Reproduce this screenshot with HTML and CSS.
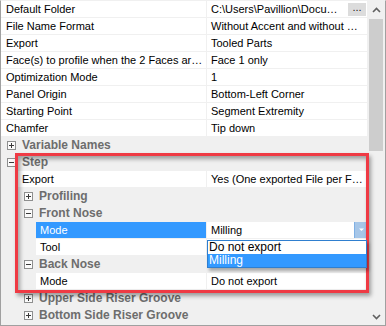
FILE: index.html
```html
<!DOCTYPE html>
<html>
<head>
<meta charset="utf-8">
<link rel="stylesheet" href="styles.css">
</head>
<body>
<div class="grid">
  <div class="rows">
    <div class="row prop l0"><div class="name">Default Folder</div><div class="val"><span class="txt">C:\Users\Pavillion\Docu…</span><span class="dots">...</span></div></div>
    <div class="row prop l0"><div class="name">File Name Format</div><div class="val"><span class="txt">Without Accent and without …</span></div></div>
    <div class="row prop l0"><div class="name">Export</div><div class="val"><span class="txt">Tooled Parts</span></div></div>
    <div class="row prop l0"><div class="name">Face(s) to profile when the 2 Faces ar…</div><div class="val"><span class="txt">Face 1 only</span></div></div>
    <div class="row prop l0"><div class="name">Optimization Mode</div><div class="val"><span class="txt">1</span></div></div>
    <div class="row prop l0"><div class="name">Panel Origin</div><div class="val"><span class="txt">Bottom-Left Corner</span></div></div>
    <div class="row prop l0"><div class="name">Starting Point</div><div class="val"><span class="txt">Segment Extremity</span></div></div>
    <div class="row prop l0"><div class="name">Chamfer</div><div class="val"><span class="txt">Tip down</span></div></div>
    <div class="row cat c0"><svg class="box" width="9" height="9" viewBox="0 0 9 9"><rect x="0.5" y="0.5" width="8" height="8" fill="#fbfbfb" stroke="#8e8f8f"/><path d="M2 4.5h5M4.5 2v5" stroke="#3a3a3a"/></svg><span class="ctxt">Variable Names</span></div>
    <div class="row cat c0"><svg class="box" width="9" height="9" viewBox="0 0 9 9"><rect x="0.5" y="0.5" width="8" height="8" fill="#fbfbfb" stroke="#8e8f8f"/><path d="M2 4.5h5" stroke="#3a3a3a"/></svg><span class="ctxt">Step</span></div>
    <div class="row prop l1"><div class="name">Export</div><div class="val"><span class="txt">Yes (One exported File per F…</span></div></div>
    <div class="row cat c1"><svg class="box" width="9" height="9" viewBox="0 0 9 9"><rect x="0.5" y="0.5" width="8" height="8" fill="#fbfbfb" stroke="#8e8f8f"/><path d="M2 4.5h5M4.5 2v5" stroke="#3a3a3a"/></svg><span class="ctxt">Profiling</span></div>
    <div class="row cat c1"><svg class="box" width="9" height="9" viewBox="0 0 9 9"><rect x="0.5" y="0.5" width="8" height="8" fill="#fbfbfb" stroke="#8e8f8f"/><path d="M2 4.5h5" stroke="#3a3a3a"/></svg><span class="ctxt">Front Nose</span></div>
    <div class="row prop l2 sel"><div class="name">Mode</div><div class="val combo"><span class="txt">Milling</span><span class="drop"><svg width="7" height="4" viewBox="0 0 7 4"><path d="M1 0.5h5L3.5 3z" fill="#fff"/></svg></span></div></div>
    <div class="row prop l2"><div class="name">Tool</div><div class="val"><span class="txt"></span></div></div>
    <div class="row cat c1"><svg class="box" width="9" height="9" viewBox="0 0 9 9"><rect x="0.5" y="0.5" width="8" height="8" fill="#fbfbfb" stroke="#8e8f8f"/><path d="M2 4.5h5" stroke="#3a3a3a"/></svg><span class="ctxt">Back Nose</span></div>
    <div class="row prop l2"><div class="name">Mode</div><div class="val"><span class="txt">Do not export</span></div></div>
    <div class="row cat c1"><svg class="box" width="9" height="9" viewBox="0 0 9 9"><rect x="0.5" y="0.5" width="8" height="8" fill="#fbfbfb" stroke="#8e8f8f"/><path d="M2 4.5h5M4.5 2v5" stroke="#3a3a3a"/></svg><span class="ctxt">Upper Side Riser Groove</span></div>
    <div class="row cat c1"><svg class="box" width="9" height="9" viewBox="0 0 9 9"><rect x="0.5" y="0.5" width="8" height="8" fill="#fbfbfb" stroke="#8e8f8f"/><path d="M2 4.5h5M4.5 2v5" stroke="#3a3a3a"/></svg><span class="ctxt">Bottom Side Riser Groove</span></div>
  </div>
  <div class="scroll">
    <div class="arrow"><svg width="9" height="6" viewBox="0 0 9 6"><path d="M1 5L4.5 1.5L8 5" fill="none" stroke="#606060" stroke-width="1.6"/></svg></div>
    <div class="track"><div class="thumb"></div></div>
    <div class="arrow"><svg width="9" height="6" viewBox="0 0 9 6"><path d="M1 1L4.5 4.5L8 1" fill="none" stroke="#606060" stroke-width="1.6"/></svg></div>
  </div>
  <div class="frame"></div>
  <div class="list">
    <div class="item">Do not export</div>
    <div class="item on">Milling</div>
  </div>
</div>
</body>
</html>
```

FILE: styles.css
```css
* { box-sizing: border-box; }
body {
  margin: 0;
  font-family: "Liberation Sans", Arial, sans-serif;
  font-size: 11px;
  color: #000;
}
.grid {
  position: relative;
  width: 386px;
  height: 326px;
  display: flex;
  background: #f0f0f0;
  border: 1px solid #a0a0a0;
  border-top: 1px solid #f0f0f0;
  overflow: hidden;
}
.rows {
  width: 367px;
  padding-right: 1px;
  display: flex;
  flex-direction: column;
  gap: 1px;
}
.row {
  height: 16px;
  flex-shrink: 0;
}
.prop {
  display: grid;
  grid-template-columns: 1fr 160px;
  column-gap: 1px;
}
.prop .name {
  background: #fff;
  line-height: 16px;
  white-space: nowrap;
  overflow: hidden;
  padding-left: 4px;
}
.l0 .name { padding-left: 5px; }
.l1 { margin-left: 17px; }
.l2 { margin-left: 35px; }
.val {
  background: #fff;
  display: flex;
  align-items: center;
  padding-left: 4px;
  white-space: nowrap;
  overflow: hidden;
}
.val .txt { flex: 1; line-height: 16px; }
.dots {
  width: 18px;
  height: 13px;
  margin-right: 1px;
  background: #dcdcdc;
  line-height: 9px;
  text-align: center;
  color: #222;
}
.sel .name { background: #3399ff; color: #fff; }
.combo { padding-right: 0; }
.drop {
  width: 13px;
  height: 16px;
  background: #a6c6e8;
  border-left: 1px solid #7fb0e4;
  display: flex;
  align-items: center;
  justify-content: center;
}
.cat {
  display: flex;
  align-items: center;
}
.box { flex-shrink: 0; margin-right: 6px; }
.c0 .box { margin-left: 6px; }
.c1 .box { margin-left: 23px; }
.ctxt {
  font-weight: bold;
  font-size: 12px;
  color: #6d6d6d;
  white-space: nowrap;
}
.scroll {
  width: 17px;
  display: flex;
  flex-direction: column;
  background: #f0f0f0;
}
.arrow {
  height: 17px;
  display: flex;
  align-items: center;
  justify-content: center;
  flex-shrink: 0;
}
.track { flex: 1; padding: 1px 2px 0 1px; }
.thumb {
  height: 132px;
  background: #cdcdcd;
}
.frame {
  position: absolute;
  left: 14px;
  top: 152px;
  width: 354px;
  height: 140px;
  border: 3px solid #ef3a44;
  box-shadow: 2px 3px 4px rgba(0,0,0,0.35), inset 2px 3px 4px rgba(0,0,0,0.35);
  pointer-events: none;
}
.list {
  position: absolute;
  left: 206px;
  top: 239px;
  width: 160px;
  height: 28px;
  background: #fff;
  border: 1px solid #2f7fcf;
  box-shadow: 2px 3px 3px rgba(0,0,0,0.3);
}
.item {
  height: 13px;
  line-height: 13px;
  padding-left: 1px;
  font-size: 12px;
}
.item.on { background: #3399ff; color: #fff; }
```
